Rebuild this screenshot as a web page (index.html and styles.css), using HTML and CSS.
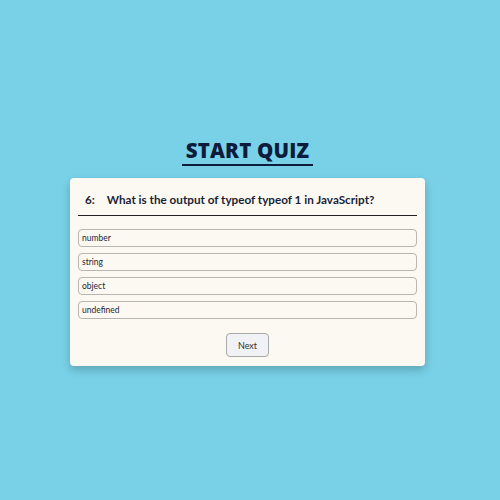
FILE: index.html
```html
<!DOCTYPE html>
<html>
<head>
<meta charset="utf-8">
<link rel="stylesheet" href="styles.css">
</head>
<body>
<div class="page">
  <h1 class="title">START QUIZ</h1>
  <div class="card">
    <div class="question"><span class="num">6:</span><span>What is the output of typeof typeof 1 in JavaScript?</span></div>
    <ul class="options">
      <li class="option">number</li>
      <li class="option">string</li>
      <li class="option">object</li>
      <li class="option">undefined</li>
    </ul>
    <div class="actions"><button class="next">Next</button></div>
  </div>
</div>
</body>
</html>
```
FILE: styles.css
```css
html, body { margin: 0; padding: 0; }
body {
  background: #79d1e8;
  font-family: Lato, "Open Sans", sans-serif;
  width: 500px;
  height: 500px;
}
.page {
  display: flex;
  flex-direction: column;
  align-items: center;
  padding-top: 137px;
  padding-right: 5px;
}
.title {
  margin: 0;
  font-family: "Open Sans", sans-serif;
  font-size: 20.5px;
  font-weight: 800;
  color: #0d1b3d;
  letter-spacing: 0.2px;
  line-height: 26px;
  padding: 0 4px 1px;
  border-bottom: 2px solid #0d1b3d;
}
.card {
  margin-top: 12px;
  width: 339px;
  background: #fcf9f2;
  border-radius: 4px;
  padding: 12px 8px 9px;
  box-shadow: 0 4px 10px rgba(0,0,0,0.22);
}
.question {
  display: flex;
  gap: 12px;
  padding: 0 0 7px 7px;
  font-size: 11.7px;
  font-weight: 700;
  color: #1a1f36;
  border-bottom: 1.5px solid #222;
  line-height: 18px;
}
.options {
  list-style: none;
  margin: 13px 0 0;
  padding: 0;
  display: flex;
  flex-direction: column;
  gap: 6px;
}
.option {
  height: 16px;
  border: 1.5px solid #b9b6b2;
  border-radius: 4px;
  font-size: 8.5px;
  line-height: 16px;
  padding-left: 3px;
  color: #1a1f36;
}
.actions {
  display: flex;
  justify-content: center;
  margin-top: 14px;
}
.next {
  width: 43px;
  height: 24px;
  background: #f1f2f5;
  border: 1.5px solid #a9a9ab;
  border-radius: 4px;
  font-family: inherit;
  font-size: 9px;
  color: #333;
  padding: 0;
}
```
